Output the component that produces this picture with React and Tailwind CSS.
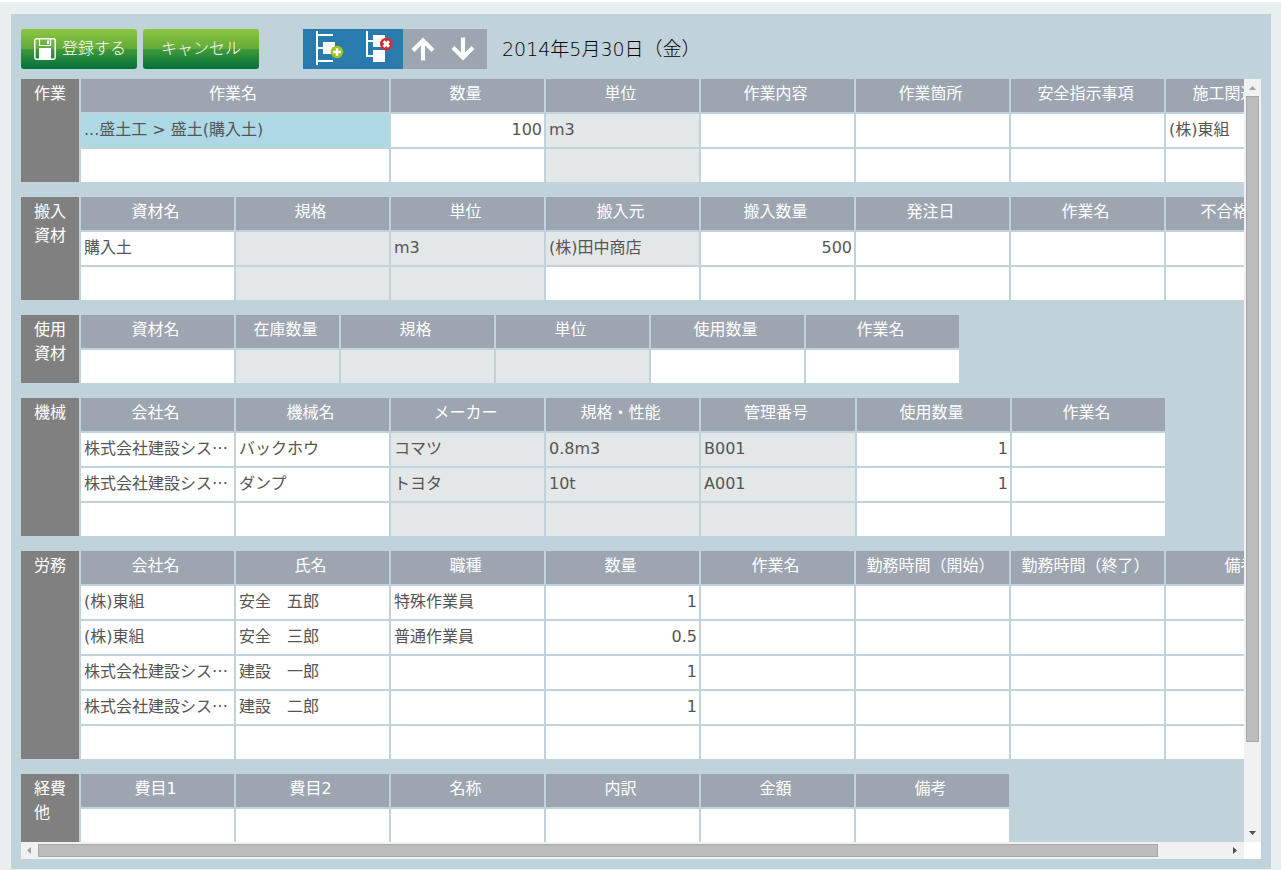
import React from 'react';

// ro: read-only column, num: right aligned
const sections = [
    {
        label: ['作業'],
        columns: [
            { title: '作業名', width: 310 },
            { title: '数量', width: 155, num: true },
            { title: '単位', width: 155, ro: true },
            { title: '作業内容', width: 155 },
            { title: '作業箇所', width: 155 },
            { title: '安全指示事項', width: 155 },
            { title: '施工関連業者', width: 155 },
        ],
        rows: [
            ['...盛土工 > 盛土(購入土)', '100', 'm3', '', '', '', '(株)東組'],
            [],
        ],
        selected: [0, 0],
    },
    {
        label: ['搬入', '資材'],
        columns: [
            { title: '資材名', width: 155 },
            { title: '規格', width: 155, ro: true },
            { title: '単位', width: 155, ro: true },
            { title: '搬入元', width: 155 },
            { title: '搬入数量', width: 155, num: true },
            { title: '発注日', width: 155 },
            { title: '作業名', width: 155 },
            { title: '不合格数量', width: 155 },
        ],
        rows: [
            ['購入土', '', 'm3', '(株)田中商店', '500'],
            [],
        ],
        locked: [0, 3],
    },
    {
        label: ['使用', '資材'],
        columns: [
            { title: '資材名', width: 155 },
            { title: '在庫数量', width: 105, ro: true },
            { title: '規格', width: 155, ro: true },
            { title: '単位', width: 155, ro: true },
            { title: '使用数量', width: 155, num: true },
            { title: '作業名', width: 155 },
        ],
        rows: [[]],
    },
    {
        label: ['機械'],
        columns: [
            { title: '会社名', width: 155 },
            { title: '機械名', width: 155 },
            { title: 'メーカー', width: 155, ro: true },
            { title: '規格・性能', width: 155, ro: true },
            { title: '管理番号', width: 156, ro: true },
            { title: '使用数量', width: 155, num: true },
            { title: '作業名', width: 155 },
        ],
        rows: [
            ['株式会社建設シス…', 'バックホウ', 'コマツ', '0.8m3', 'B001', '1'],
            ['株式会社建設シス…', 'ダンプ', 'トヨタ', '10t', 'A001', '1'],
            [],
        ],
    },
    {
        label: ['労務'],
        columns: [
            { title: '会社名', width: 155 },
            { title: '氏名', width: 155 },
            { title: '職種', width: 155 },
            { title: '数量', width: 155, num: true },
            { title: '作業名', width: 155 },
            { title: '勤務時間（開始）', width: 155 },
            { title: '勤務時間（終了）', width: 155 },
            { title: '備考', width: 155 },
        ],
        rows: [
            ['(株)東組', '安全　五郎', '特殊作業員', '1'],
            ['(株)東組', '安全　三郎', '普通作業員', '0.5'],
            ['株式会社建設シス…', '建設　一郎', '', '1'],
            ['株式会社建設シス…', '建設　二郎', '', '1'],
            [],
        ],
    },
    {
        label: ['経費', '他'],
        columns: [
            { title: '費目1', width: 155 },
            { title: '費目2', width: 155 },
            { title: '名称', width: 155 },
            { title: '内訳', width: 155 },
            { title: '金額', width: 155 },
            { title: '備考', width: 155 },
        ],
        rows: [[]],
    },
];

const isAt = (pos, r, c) => Boolean(pos) && pos[0] === r && pos[1] === c;

const cellColor = (section, r, c) => {
    if (isAt(section.selected, r, c)) return 'bg-[#add8e6]';
    if (section.columns[c].ro || isAt(section.locked, r, c)) return 'bg-[#e3e7e7]';
    return 'bg-white';
};

const SectionTable = ({ section }) => {
    const total = section.columns.reduce((sum, col) => sum + col.width, 58);

    return (
        <table
            className="table-fixed border-separate border-spacing-0 text-base leading-6"
            style={{ width: total }}
        >
            <colgroup>
                <col className="w-[58px]" />
                {section.columns.map((col, c) => (
                    <col key={c} style={{ width: col.width }} />
                ))}
            </colgroup>
            <tbody>
                <tr>
                    <th
                        scope="rowgroup"
                        rowSpan={section.rows.length + 1}
                        className="bg-[#808080] pt-[3px] pl-[13px] text-left align-top font-normal text-white"
                    >
                        {section.label.map((line) => (
                            <div key={line}>{line}</div>
                        ))}
                    </th>
                    {section.columns.map((col, c) => (
                        <th
                            key={c}
                            scope="col"
                            className="h-[33px] border-l-2 border-[#c0d2da] bg-[#9da5b1] p-0 pt-[3px] pr-1 text-center align-top font-normal whitespace-nowrap text-white"
                        >
                            {col.title}
                        </th>
                    ))}
                </tr>
                {section.rows.map((row, r) => (
                    <tr key={r}>
                        {section.columns.map((col, c) => (
                            <td
                                key={c}
                                className={`h-[35px] overflow-hidden border-t-2 border-l-2 border-[#c0d2da] pt-1 pr-[2px] pb-0 pl-[3px] align-top whitespace-nowrap text-[#555555] ${
                                    col.num ? 'text-right' : 'text-left'
                                } ${cellColor(section, r, c)}`}
                            >
                                {row[c]?.endsWith('…') ? (
                                    <span className="font-['Noto_Sans_CJK_JP',sans-serif] leading-none">{row[c]}</span>
                                ) : (
                                    row[c]
                                )}
                            </td>
                        ))}
                    </tr>
                ))}
            </tbody>
        </table>
    );
};

const SaveIcon = () => (
    <svg className="h-[22px] w-[22px] shrink-0" viewBox="0 0 22 22" fill="none">
        <path d="M2.5 .8h17a1.7 1.7 0 0 1 1.7 1.7v17a1.7 1.7 0 0 1-1.7 1.7h-17a1.7 1.7 0 0 1-1.7-1.7v-17A1.7 1.7 0 0 1 2.5.8Z" stroke="white" strokeWidth="1.5" />
        <path d="M5.5 1v6.5h11V1" stroke="white" strokeWidth="1.2" />
        <path d="M13 2.5h2V6h-2zM5 10h12v11H5z" fill="white" />
    </svg>
);

const AddRowIcon = () => (
    <svg className="h-10 w-[50px]" viewBox="0 0 50 40">
        <path d="M13 2h2v34h-2zM15 5h15v2H15zM15 18h5v2h-5zM15 31h15v2H15zM20 13h12v12H20z" fill="white" />
        <circle cx="34" cy="23" r="6.3" fill="#9fc41c" />
        <path d="M34 19.2v7.6M30.2 23h7.6" stroke="white" strokeWidth="2.4" />
    </svg>
);

const DeleteRowIcon = () => (
    <svg className="h-10 w-[50px]" viewBox="0 0 50 40">
        <path d="M13 2h2v26h-2zM15 11h5v2h-5zM15 26h5v2h-5zM20 6h12v12H20zM20 21h12v12H20z" fill="white" />
        <circle cx="33.3" cy="15" r="6.3" fill="#dc2a2a" />
        <path d="m30.6 12.3 5.4 5.4M36 12.3l-5.4 5.4" stroke="white" strokeWidth="2.8" />
    </svg>
);

const ArrowIcon = ({ down }) => (
    <svg className={`h-10 w-10 ${down ? 'rotate-180' : ''}`} viewBox="0 0 40 40" fill="none">
        <path d="M20 31.5V12M10 21.5 20 11.5 30 21.5" stroke="white" strokeWidth="4.2" />
    </svg>
);

const ScrollArrow = ({ label, d, color }) => (
    <button type="button" aria-label={label} className={`flex h-[17px] w-[17px] shrink-0 items-center justify-center ${color}`}>
        <svg className="h-[17px] w-[17px]" viewBox="0 0 17 17" fill="currentColor">
            <path d={d} />
        </svg>
    </button>
);

const greenButton =
    'flex h-10 w-[116px] items-center justify-center rounded-[3px] bg-[linear-gradient(to_bottom,#8cc63f_0%,#62aa3a_50%,#409a3a_51%,#00703a_100%)] text-base font-light text-white';

const App = () => {
    return (
        <div className="min-h-screen border-t-2 border-white bg-[#e9eeef] px-[10px] pt-3 pb-px pl-[11px] font-['DejaVu_Sans','Noto_Sans_CJK_JP',sans-serif]">
            <main className="bg-[#c0d2da] px-[10px] pt-[15px] pb-[10px]">
                {/* Toolbar */}
                <div className="flex items-center">
                    <div className="flex gap-[6px]">
                        <button type="button" className={`${greenButton} gap-[6px] pl-[2px]`}>
                            <SaveIcon />
                            登録する
                        </button>
                        <button type="button" className={greenButton}>
                            キャンセル
                        </button>
                    </div>
                    <div className="ml-11 flex">
                        <button type="button" aria-label="行を追加" className="bg-[#297bae]">
                            <AddRowIcon />
                        </button>
                        <button type="button" aria-label="行を削除" className="bg-[#297bae]">
                            <DeleteRowIcon />
                        </button>
                        <div className="flex bg-[#9da5b1] pr-1">
                            <button type="button" aria-label="上へ">
                                <ArrowIcon />
                            </button>
                            <button type="button" aria-label="下へ">
                                <ArrowIcon down />
                            </button>
                        </div>
                    </div>
                    <p className="ml-[15px] text-[19px] leading-7 font-light text-black">2014年5月30日（金）</p>
                </div>

                {/* Daily report grids */}
                <div className="mt-[10px] grid grid-cols-[minmax(0,1fr)_17px] bg-white">
                    <div className="flex flex-col gap-[15px] overflow-hidden bg-[#c0d2da]">
                        {sections.map((section) => (
                            <SectionTable key={section.label.join('')} section={section} />
                        ))}
                    </div>
                    <div className="flex flex-col bg-[#f1f1f1]">
                        <ScrollArrow label="上にスクロール" d="M5 11h7L8.5 7z" color="text-[#a3a3a3]" />
                        <div className="flex-1">
                            <div className="mx-auto h-[88.6%] w-[13px] border border-[#a8a8a8] bg-[#bcbcbc]" />
                        </div>
                        <ScrollArrow label="下にスクロール" d="M5 6h7L8.5 10z" color="text-[#505050]" />
                    </div>
                    <div className="flex items-center bg-[#f1f1f1]">
                        <ScrollArrow label="左にスクロール" d="M10 5v7L6 8.5z" color="text-[#a3a3a3]" />
                        <div className="flex-1">
                            <div className="h-[13px] w-[94.2%] border border-[#a8a8a8] bg-[#bcbcbc]" />
                        </div>
                        <ScrollArrow label="右にスクロール" d="M6 5v7L10 8.5z" color="text-[#505050]" />
                    </div>
                </div>
            </main>
        </div>
    );
};

export default App;
